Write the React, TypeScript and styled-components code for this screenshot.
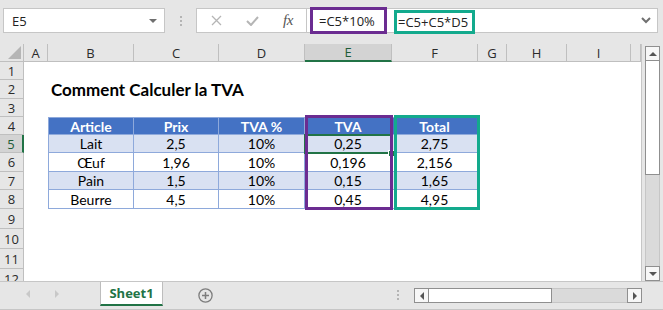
import React from "react";
import styled, { createGlobalStyle } from "styled-components";

const GREEN = "#217346";
const PURPLE = "#6b2c91";
const TEAL = "#13aa8d";
const LINE = "#bfbfbf";

const GlobalStyle = createGlobalStyle`
  html, body {
    margin: 0;
    padding: 0;
  }
  body {
    width: 663px;
    height: 310px;
    overflow: hidden;
    background: #e6e6e6;
    font-family: "Open Sans", "Liberation Sans", sans-serif;
  }
`;

const Window = styled.div`
  width: 663px;
  height: 310px;
  display: flex;
  flex-direction: column;
  background: #e6e6e6;
  overflow: hidden;
`;

/* ---------- formula bar ---------- */

const FormulaRow = styled.div`
  height: 44px;
  box-sizing: border-box;
  padding: 8px 5px 0 3px;
  display: flex;
  align-items: flex-start;
`;

const NameBox = styled.div`
  width: 162px;
  height: 25px;
  box-sizing: border-box;
  background: #fff;
  border: 1px solid #c6c6c6;
  display: flex;
  align-items: center;
  justify-content: space-between;
  padding: 0 7px 0 8px;
  font-size: 13px;
  color: #222;
`;

const Caret = styled.span<{ $dir: "up" | "down" | "left" | "right"; $color?: string; $size?: number }>`
  width: 0;
  height: 0;
  display: block;
  ${({ $dir, $color = "#666", $size = 4 }) =>
    $dir === "down"
      ? `border-left: ${$size}px solid transparent; border-right: ${$size}px solid transparent; border-top: ${$size}px solid ${$color};`
      : $dir === "up"
      ? `border-left: ${$size}px solid transparent; border-right: ${$size}px solid transparent; border-bottom: ${$size}px solid ${$color};`
      : $dir === "left"
      ? `border-top: ${$size}px solid transparent; border-bottom: ${$size}px solid transparent; border-right: ${$size}px solid ${$color};`
      : `border-top: ${$size}px solid transparent; border-bottom: ${$size}px solid transparent; border-left: ${$size}px solid ${$color};`}
`;

const Grip = styled.div<{ $w: number; $h: number }>`
  width: ${(p) => p.$w}px;
  height: ${(p) => p.$h}px;
  display: flex;
  flex-direction: column;
  align-items: center;
  justify-content: center;
  gap: 2px;

  span {
    width: 2px;
    height: 2px;
    background: #b4b4b4;
  }
`;

const FxBox = styled.div`
  width: 110px;
  height: 25px;
  box-sizing: border-box;
  background: #fff;
  border: 1px solid #c6c6c6;
  border-right: none;
  display: flex;
  align-items: center;
  padding-left: 1px;
`;

const FxSlot = styled.div`
  width: 36px;
  display: flex;
  justify-content: center;
  align-items: center;
`;

const FxLabel = styled.span`
  font-family: "Liberation Serif", "DejaVu Serif", serif;
  font-style: italic;
  font-size: 15px;
  color: #555;
  letter-spacing: -0.5px;
`;

const FormulaInput = styled.div`
  flex: 1;
  height: 25px;
  box-sizing: border-box;
  background: #fff;
  border: 1px solid #c6c6c6;
  display: flex;
  align-items: center;
  padding-left: 3px;
  font-size: 13px;
  color: #222;
`;

const FormulaMark = styled.div<{ $color: string; $w: number; $h: number; $pad: number; $gap?: number; $shift?: number }>`
  width: ${(p) => p.$w}px;
  height: ${(p) => p.$h}px;
  box-sizing: border-box;
  border: 3px solid ${(p) => p.$color};
  margin-left: ${(p) => p.$gap ?? 0}px;
  margin-top: ${(p) => p.$shift ?? 0}px;
  padding-left: ${(p) => p.$pad}px;
  display: flex;
  align-items: center;
  white-space: nowrap;
`;

const Chevron = styled.svg`
  margin-left: auto;
  margin-right: 6px;
`;

/* ---------- sheet ---------- */

const SheetArea = styled.div`
  height: 237px;
  display: flex;
`;

const Grid = styled.div`
  width: 641px;
  height: 237px;
  border-right: 1px solid #c6c6c6;
  background: #fff;
  overflow: hidden;
  display: grid;
  grid-template-columns: 24px 24px 86px 85px 86px 87px 86px 29px 60px 64px 10px;
  grid-template-rows: 18px 18px 19px 18px 18px 18px 19px 18px 19px 20px 20px 20px 20px;
  align-content: start;
`;

const Corner = styled.div`
  grid-column: 1;
  grid-row: 1;
  background: #e6e6e6;
  border-right: 1px solid ${LINE};
  border-bottom: 1px solid ${LINE};
  display: flex;
  align-items: flex-end;
  justify-content: flex-end;
  padding: 0 2px 2px 0;
`;

const ColHeader = styled.div<{ $col: number; $active?: boolean }>`
  grid-column: ${(p) => p.$col};
  grid-row: 1;
  background: ${(p) => (p.$active ? "#d3d3d3" : "#e6e6e6")};
  border-right: 1px solid ${LINE};
  border-bottom: ${(p) => (p.$active ? `2px solid ${GREEN}` : `1px solid ${LINE}`)};
  display: flex;
  align-items: center;
  justify-content: center;
  font-size: 13px;
  color: ${(p) => (p.$active ? "#1d5c38" : "#2b2b2b")};
`;

const RowHeader = styled.div<{ $row: number; $active?: boolean }>`
  grid-column: 1;
  grid-row: ${(p) => p.$row};
  background: ${(p) => (p.$active ? "#d3d3d3" : "#e6e6e6")};
  border-bottom: 1px solid ${LINE};
  border-right: ${(p) => (p.$active ? `2px solid ${GREEN}` : `1px solid ${LINE}`)};
  display: flex;
  align-items: center;
  justify-content: center;
  font-size: 13px;
  color: ${(p) => (p.$active ? "#1d5c38" : "#2b2b2b")};
`;

const Title = styled.div`
  grid-column: 3 / span 4;
  grid-row: 3;
  display: flex;
  align-items: center;
  padding-left: 3px;
  font-family: Lato, "Liberation Sans", sans-serif;
  font-weight: bold;
  font-size: 17px;
  color: #000;
  white-space: nowrap;
`;

const TCell = styled.div<{ $col: number; $row: number; $head?: boolean; $band?: boolean; $first?: boolean }>`
  grid-column: ${(p) => p.$col};
  grid-row: ${(p) => p.$row};
  background: ${(p) => (p.$head ? "#4472c4" : p.$band ? "#d9e1f2" : "#fff")};
  color: ${(p) => (p.$head ? "#fff" : "#000")};
  font-weight: ${(p) => (p.$head ? "bold" : "normal")};
  border-right: 1px solid #8ea9db;
  border-bottom: 1px solid #8ea9db;
  border-left: ${(p) => (p.$first ? "1px solid #8ea9db" : "none")};
  border-top: ${(p) => (p.$head ? "1px solid #8ea9db" : "none")};
  display: flex;
  align-items: center;
  justify-content: center;
  font-family: Lato, "Liberation Sans", sans-serif;
  font-size: 14px;
  white-space: nowrap;
`;

const Selection = styled.div`
  grid-column: 6;
  grid-row: 6;
  position: relative;
  z-index: 1;
  margin: -1px 0 -1px -1px;
  border: 2px solid ${GREEN};
`;

const FillHandle = styled.span`
  position: absolute;
  right: -5px;
  bottom: -5px;
  width: 5px;
  height: 5px;
  background: ${GREEN};
  border: 1px solid #fff;
`;

const Highlight = styled.div<{ $col: number; $color: string; $margin: string }>`
  grid-column: ${(p) => p.$col};
  grid-row: 5 / 10;
  z-index: 2;
  margin: ${(p) => p.$margin};
  border: 3px solid ${(p) => p.$color};
`;

const VScroll = styled.div`
  width: 15px;
  margin-left: 3px;
  padding-top: 2px;
  display: flex;
  flex-direction: column;
`;

const ScrollBtn = styled.div`
  width: 15px;
  height: 15px;
  box-sizing: border-box;
  flex-shrink: 0;
  background: #f7f7f7;
  border: 1px solid #8f8f8f;
  display: flex;
  align-items: center;
  justify-content: center;
`;

const Thumb = styled.div<{ $vertical?: boolean; $len: number }>`
  ${(p) => (p.$vertical ? `height: ${p.$len}px; width: 15px;` : `width: ${p.$len}px; height: 15px;`)}
  box-sizing: border-box;
  flex-shrink: 0;
  background: #fff;
  border: 1px solid #8f8f8f;
  ${(p) => (p.$vertical ? "border-top: none;" : "border-left: none;")}
`;

const Track = styled.div<{ $vertical?: boolean }>`
  flex: 1;
  background: #dadada;
  box-sizing: border-box;
  ${(p) =>
    p.$vertical
      ? "border-left: 1px solid #c6c6c6; border-right: 1px solid #c6c6c6;"
      : "border-top: 1px solid #c6c6c6; border-bottom: 1px solid #c6c6c6;"}
`;

/* ---------- sheet tabs ---------- */

const TabBar = styled.div`
  height: 29px;
  box-sizing: border-box;
  border-top: 1px solid #c6c6c6;
  border-bottom: 1px solid #c6c6c6;
  padding-right: 21px;
  display: flex;
  align-items: flex-start;
`;

const NavArea = styled.div`
  width: 100px;
  height: 24px;
  display: flex;
  align-items: center;
  gap: 25px;
  padding-left: 26px;
  box-sizing: border-box;
`;

const SheetTab = styled.div`
  width: 63px;
  height: 24px;
  box-sizing: border-box;
  background: #fff;
  border-left: 1px solid #bdbdbd;
  border-right: 1px solid #bdbdbd;
  border-bottom: 2px solid ${GREEN};
  display: flex;
  align-items: center;
  justify-content: center;
  font-size: 13px;
  font-weight: bold;
  color: ${GREEN};
`;

const AddSheet = styled.svg`
  margin: 6px 0 0 35px;
`;

const Spacer = styled.div`
  flex: 1;
`;

const HScroll = styled.div`
  width: 228px;
  height: 15px;
  margin: 6px 0 0 8px;
  display: flex;
`;

const columns = ["A", "B", "C", "D", "E", "F", "G", "H", "I", ""];
const rowHeaders = [1, 2, 3, 4, 5, 6, 7, 8, 9, 10, 11, 12];

const head = ["Article", "Prix", "TVA %", "TVA", "Total"];
const data = [
  ["Lait", "2,5", "10%", "0,25", "2,75"],
  ["Œuf", "1,96", "10%", "0,196", "2,156"],
  ["Pain", "1,5", "10%", "0,15", "1,65"],
  ["Beurre", "4,5", "10%", "0,45", "4,95"],
];

const App = () => {
  return (
    <Window>
      <GlobalStyle />
      <FormulaRow>
        <NameBox>
          <span>E5</span>
          <Caret $dir="down" $color="#6f6f6f" />
        </NameBox>
        <Grip $w={31} $h={25}>
          <span />
          <span />
          <span />
        </Grip>
        <FxBox>
          <FxSlot>
            <svg width="11" height="11" viewBox="0 0 11 11">
              <path d="M1 1 L10 10 M10 1 L1 10" stroke="#b5b5b5" strokeWidth="1.3" fill="none" />
            </svg>
          </FxSlot>
          <FxSlot>
            <svg width="13" height="10" viewBox="0 0 13 10">
              <path d="M1 5 L5 9 L12 1" stroke="#b5b5b5" strokeWidth="2" fill="none" />
            </svg>
          </FxSlot>
          <FxSlot>
            <FxLabel>fx</FxLabel>
          </FxSlot>
        </FxBox>
        <FormulaInput>
          <FormulaMark $color={PURPLE} $w={77} $h={27} $pad={6}>
            =C5*10%
          </FormulaMark>
          <FormulaMark $color={TEAL} $w={81} $h={24} $pad={1} $gap={7} $shift={2}>
            =C5+C5*D5
          </FormulaMark>
          <Chevron width="10" height="7" viewBox="0 0 10 7">
            <path d="M1 1 L5 5 L9 1" stroke="#707070" strokeWidth="2" fill="none" />
          </Chevron>
        </FormulaInput>
      </FormulaRow>

      <SheetArea>
        <Grid>
          <Corner>
            <svg width="13" height="13" viewBox="0 0 13 13">
              <polygon points="13,0 13,13 0,13" fill="#b5b5b5" />
            </svg>
          </Corner>
          {columns.map((c, i) => (
            <ColHeader key={i} $col={i + 2} $active={c === "E"}>
              {c}
            </ColHeader>
          ))}
          {rowHeaders.map((r) => (
            <RowHeader key={r} $row={r + 1} $active={r === 5}>
              {r}
            </RowHeader>
          ))}

          <Title>Comment Calculer la TVA</Title>

          {head.map((h, i) => (
            <TCell key={h} $col={i + 3} $row={5} $head $first={i === 0}>
              {h}
            </TCell>
          ))}
          {data.map((row, r) =>
            row.map((v, i) => (
              <TCell key={`${r}-${i}`} $col={i + 3} $row={r + 6} $band={r % 2 === 0} $first={i === 0}>
                {v}
              </TCell>
            ))
          )}

          <Selection>
            <FillHandle />
          </Selection>
          <Highlight $col={6} $color={PURPLE} $margin="-2px -1px -1px 0" />
          <Highlight $col={7} $color={TEAL} $margin="-2px -2px -1px 2px" />
        </Grid>

        <VScroll>
          <ScrollBtn>
            <Caret $dir="up" $color="#555" $size={4} />
          </ScrollBtn>
          <Thumb $vertical $len={114} />
          <Track $vertical />
          <ScrollBtn>
            <Caret $dir="down" $color="#555" $size={4} />
          </ScrollBtn>
        </VScroll>
      </SheetArea>

      <TabBar>
        <NavArea>
          <Caret $dir="left" $color="#c8c8c8" $size={4} />
          <Caret $dir="right" $color="#c8c8c8" $size={4} />
        </NavArea>
        <SheetTab>Sheet1</SheetTab>
        <AddSheet width="15" height="15" viewBox="0 0 15 15">
          <circle cx="7.5" cy="7.5" r="6.6" stroke="#7d7d7d" strokeWidth="1.3" fill="none" />
          <path d="M7.5 4 V11 M4 7.5 H11" stroke="#7d7d7d" strokeWidth="1.5" />
        </AddSheet>
        <Spacer />
        <Grip $w={16} $h={26}>
          <span />
          <span />
          <span />
        </Grip>
        <HScroll>
          <ScrollBtn>
            <Caret $dir="left" $color="#555" $size={4} />
          </ScrollBtn>
          <Thumb $len={123} />
          <Track />
          <ScrollBtn>
            <Caret $dir="right" $color="#555" $size={4} />
          </ScrollBtn>
        </HScroll>
      </TabBar>
    </Window>
  );
};

export default App;
